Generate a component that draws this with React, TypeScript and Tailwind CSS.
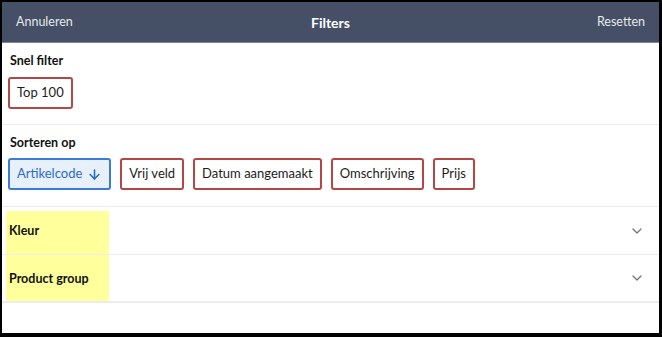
import { ArrowDown, ChevronDown } from 'lucide-react'

const sortOptions = ['Vrij veld', 'Datum aangemaakt', 'Omschrijving', 'Prijs']

function Chip({ label }: { label: string }) {
  return (
    <button className="flex h-[32px] items-center rounded-[3px] border-2 border-[#b44646] bg-white px-[7px] text-[13px] text-[#1c1c1c]">
      {label}
    </button>
  )
}

export default function App() {
  return (
    <div
      className="h-[337px] w-[662px] bg-black pb-[4px] pl-[2px] pr-[3px] pt-[2px]"
      style={{ fontFamily: 'Lato, "Noto Sans", sans-serif' }}
    >
      <div className="relative flex h-full flex-col bg-white">
        <header className="grid h-[41px] shrink-0 grid-cols-3 items-center border-b border-[#7d8698] bg-[#454f65] px-[14px]">
          <span className="text-[12.5px] text-[#e6e8ec]">Annuleren</span>
          <span className="text-center text-[14px] font-bold text-white">Filters</span>
          <span className="text-right text-[12.5px] text-[#e6e8ec]">Resetten</span>
        </header>

        <section className="border-b border-[#ececec] px-[6px] pb-[15px] pt-[9px]">
          <h2 className="pl-[2px] text-[12.5px] font-bold leading-[18px] text-[#111]">Snel filter</h2>
          <div className="mt-[7px] flex">
            <Chip label="Top 100" />
          </div>
        </section>

        <section className="border-b border-[#ececec] px-[6px] pb-[16px] pt-[9px]">
          <h2 className="pl-[2px] text-[12.5px] font-bold leading-[18px] text-[#111]">Sorteren op</h2>
          <div className="mt-[6px] flex gap-[9px]">
            <button className="flex h-[32px] items-center gap-[5px] rounded-[3px] border-2 border-[#3a7bd5] bg-[#e8f0fb] px-[7px] text-[13px] text-[#2b6cc8]">
              Artikelcode
              <ArrowDown size={15} strokeWidth={2.5} />
            </button>
            {sortOptions.map((o) => (
              <Chip key={o} label={o} />
            ))}
          </div>
        </section>

        <div className="absolute left-[4px] top-[209px] h-[91px] w-[103px] bg-[#ffff9c]" />

        {['Kleur', 'Product group'].map((label, i) => (
          <div
            key={label}
            className={`relative flex h-[48px] items-center justify-between border-b border-[#ececec] pl-[7px] pr-[14px] ${i === 1 ? 'border-b-2' : ''}`}
          >
            <span className="pt-[2px] text-[12.5px] font-bold text-[#111]">{label}</span>
            <ChevronDown size={16} strokeWidth={2} className="text-[#777]" />
          </div>
        ))}
      </div>
    </div>
  )
}
